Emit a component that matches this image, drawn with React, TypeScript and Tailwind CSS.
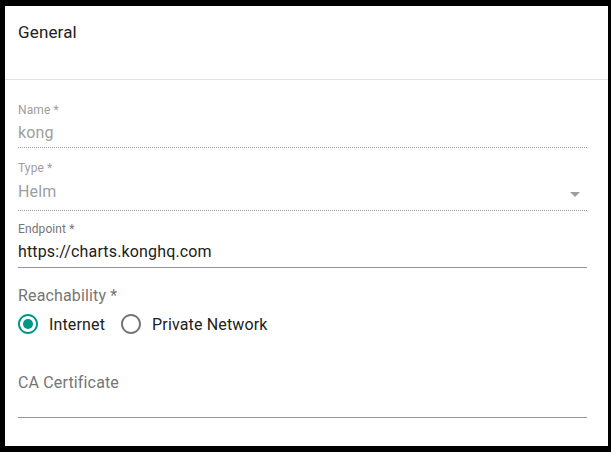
export default function App() {
  return (
    <div className="h-[452px] w-[611px] bg-black pl-[5px] pt-[6px]">
      <div className="flex h-[440px] w-[603px] flex-col bg-white font-['Roboto',sans-serif] tracking-[0.15px]">
        <div className="h-[74px] border-b border-[#e0e0e0] pl-[13px] pt-[17px]">
          <div className="text-[17px] leading-[19px] text-[#212121]">General</div>
        </div>

        <div className="flex flex-col pl-[13px] pr-[21px]">
          <DisabledField label="Name *" value="kong" className="mt-[23px]" padTop="pt-[6px]" padBottom="pb-[5px]" />
          <DisabledField label="Type *" value="Helm" className="mt-[13px]" padTop="pt-[7px]" padBottom="pb-[9px]" select />

          <div className="mt-[11px] flex flex-col">
            <label className="text-[12px] leading-[14px] tracking-[0.11px] text-[#757575]">Endpoint *</label>
            <div className="border-b border-[#949494] pb-[6px] pt-[6px] text-[16px] leading-[19px] text-[#212121]">
              https://charts.konghq.com
            </div>
          </div>

          <div className="mt-[18px] text-[16px] leading-[19px] text-[#757575]">Reachability *</div>
          <div className="mt-[7px] flex items-center">
            <RadioOption label="Internet" checked />
            <RadioOption label="Private Network" />
          </div>

          <div className="mt-[37px] border-b border-[#949494] pb-[25px] text-[16px] leading-[19px] text-[#757575]">
            CA Certificate
          </div>
        </div>
      </div>
    </div>
  );
}

interface FieldProps {
  label: string;
  value: string;
  className: string;
  padTop: string;
  padBottom: string;
  select?: boolean;
}

function DisabledField({ label, value, className, padTop, padBottom, select }: FieldProps) {
  return (
    <div className={"flex flex-col " + className}>
      <label className="text-[12px] leading-[14px] tracking-[0.11px] text-[#9e9e9e]">{label}</label>
      <div
        className={
          "relative border-b border-dotted border-[#9e9e9e] text-[16px] leading-[19px] text-[#9e9e9e] " +
          padTop +
          " " +
          padBottom
        }
      >
        {value}
        {select && (
          <svg
            width="24"
            height="24"
            viewBox="0 0 24 24"
            className="absolute right-0 top-[7px] fill-[#9e9e9e]"
          >
            <path d="M7 10l5 5 5-5z" />
          </svg>
        )}
      </div>
    </div>
  );
}

function RadioOption({ label, checked }: { label: string; checked?: boolean }) {
  return (
    <label className="-ml-[11px] mr-[16px] flex h-[24px] items-center">
      <span className="flex px-[9px]">
        <svg
          width="24"
          height="24"
          viewBox="0 0 24 24"
          className={checked ? "fill-[#009688]" : "fill-[#757575]"}
        >
          <path d="M12 2C6.48 2 2 6.48 2 12s4.48 10 10 10 10-4.48 10-10S17.52 2 12 2zm0 18c-4.42 0-8-3.58-8-8s3.58-8 8-8 8 3.58 8 8-3.58 8-8 8z" />
          {checked && <circle cx="12" cy="12" r="5" />}
        </svg>
      </span>
      <span className="text-[16px] leading-[19px] text-[#212121]">{label}</span>
    </label>
  );
}
